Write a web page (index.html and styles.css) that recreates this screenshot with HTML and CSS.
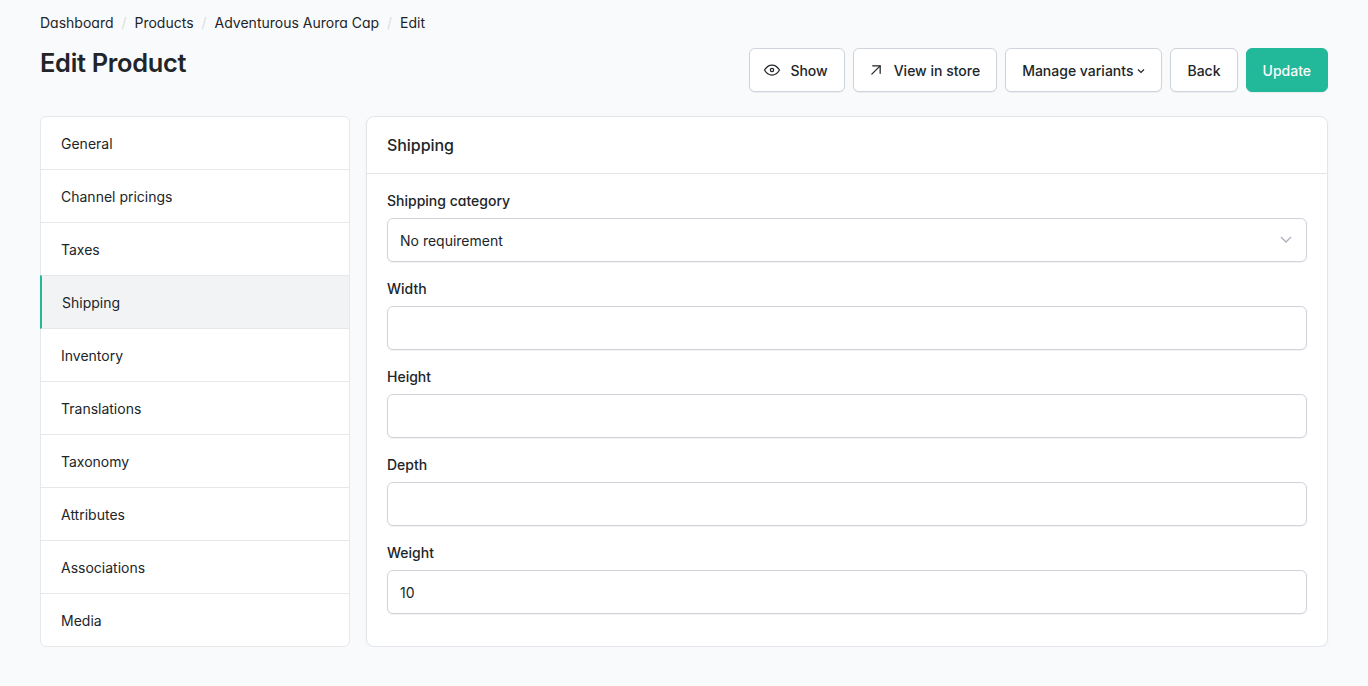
FILE: index.html
```
<!DOCTYPE html>
<html lang="en">
<head>
<meta charset="utf-8">
<title>Edit Product</title>
<link rel="stylesheet" href="styles.css">
</head>
<body>
<div class="page">
  <nav class="breadcrumb"><a>Dashboard</a><i>/</i><a>Products</a><i>/</i><a>Adventurous Aurora Cap</a><i>/</i><a>Edit</a></nav>
  <header class="header">
    <h1 class="title">Edit Product</h1>
    <div class="actions">
      <a class="btn"><svg class="icon" viewBox="0 0 24 24"><path d="M10 12a2 2 0 1 0 4 0a2 2 0 0 0 -4 0"/><path d="M21 12c-2.400 4 -5.400 6 -9 6c-3.600 0 -6.600 -2 -9 -6c2.400 -4 5.400 -6 9 -6c3.600 0 6.600 2 9 6"/></svg>Show</a>
      <a class="btn"><svg class="icon" viewBox="0 0 24 24"><path d="M17 7l-10 10"/><path d="M8 7l9 0l0 9"/></svg>View in store</a>
      <button class="btn">Manage variants<svg class="caret" viewBox="0 0 8 8"><path d="M1 2.500l3 3 3-3"/></svg></button>
      <a class="btn back">Back</a>
      <button class="btn primary">Update</button>
    </div>
  </header>
  <main class="content">
    <div class="tabs">
      <button class="tab">General</button>
      <button class="tab">Channel pricings</button>
      <button class="tab">Taxes</button>
      <button class="tab active">Shipping</button>
      <button class="tab">Inventory</button>
      <button class="tab">Translations</button>
      <button class="tab">Taxonomy</button>
      <button class="tab">Attributes</button>
      <button class="tab">Associations</button>
      <button class="tab">Media</button>
    </div>
    <section class="card">
      <div class="card-header">Shipping</div>
      <div class="card-body">
        <div class="field"><label class="label">Shipping category</label><div class="control select">No requirement<svg class="chevron" viewBox="0 0 16 16"><path d="M3 5l5 5 5-5"/></svg></div></div>
        <div class="field"><label class="label">Width</label><input class="control"></div>
        <div class="field"><label class="label">Height</label><input class="control"></div>
        <div class="field"><label class="label">Depth</label><input class="control"></div>
        <div class="field"><label class="label">Weight</label><input class="control" value="10"></div>
      </div>
    </section>
  </main>
</div>
</body>
</html>
```
FILE: styles.css
```
* { box-sizing: border-box; }
body {
  margin: 0;
  background: #f9fafc;
  color: #212529;
  font: 400 14px/20px Inter, sans-serif;
  font-feature-settings: "cv03", "cv04", "cv11";
}
.page { padding: 13px 40px 0; }
.breadcrumb { display: flex; height: 20px; }
.breadcrumb i { width: 21px; text-align: center; font-style: normal; color: #dadde1; }
.header { display: flex; justify-content: space-between; align-items: flex-start; height: 83px; padding-top: 15px; }
.title { margin: 0; font-size: 25.4px; line-height: 30px; font-weight: 600; letter-spacing: -.29px; }
.actions { display: flex; gap: 8px; }
.btn {
  display: flex;
  align-items: center;
  height: 44px;
  padding: 1px 16px 0;
  border: 1px solid #ced4da;
  border-radius: 6px;
  background: #fff;
  color: #212529;
  font: 500 14px/20px Inter, sans-serif;
  box-shadow: 0 1px 1px rgba(33, 37, 41, .06);
}
.back { font-feature-settings: "cv03", "cv04"; }
.primary { border-color: #22b99a; background: #22b99a; color: #f9fafb; }
.icon { width: 20px; height: 20px; margin: -2px 8px 0 -4px; fill: none; stroke: currentColor; stroke-width: 1.5; stroke-linecap: round; stroke-linejoin: round; }
.caret { width: 8px; height: 8px; margin: 0 0 0 4px; fill: none; stroke: currentColor; stroke-width: 1.2; }
.content { display: flex; gap: 16px; height: 531px; }
.tabs { width: 310px; border: 1px solid #e6e8ec; border-radius: 6px; background: #fff; }
.tab {
  display: block;
  width: 100%;
  height: 53px;
  padding: 1px 20px 0;
  border: 0;
  border-bottom: 1px solid #e6e8ec;
  background: none;
  color: #212529;
  font: 400 14px/20px Inter, sans-serif;
  text-align: left;
}
.tab:last-child { border-bottom: 0; }
.tab.active { width: calc(100% + 1px); height: 54px; margin: -1px 0 0 -1px; border-top: 1px solid #e6e8ec; border-left: 2px solid #22b99a; background: #f2f3f5; }
.card { flex: 1; border: 1px solid #e2e6eb; border-radius: 8px; background: #fff; box-shadow: 0 2px 4px rgba(33, 37, 41, .03); }
.card-header { height: 57px; padding: 16px 20px; border-bottom: 1px solid #e2e6eb; font-size: 16px; line-height: 24px; font-weight: 500; letter-spacing: -.06px; }
.card-body { padding: 17px 20px 0; }
.field { margin-bottom: 17px; }
.label { display: block; height: 27px; font-weight: 500; }
.control {
  display: block;
  width: 100%;
  height: 44px;
  padding: 1px 12px 0;
  border: 1px solid #ced4da;
  border-radius: 6px;
  background: #fff;
  color: #212529;
  font: 400 14px/20px Inter, sans-serif;
  box-shadow: 0 1px 1px rgba(33, 37, 41, .06);
}
.select { display: flex; align-items: center; justify-content: space-between; }
.chevron { width: 16px; height: 16px; margin-top: -1px; fill: none; stroke: #a8b1bb; stroke-width: 1.3; }
```
